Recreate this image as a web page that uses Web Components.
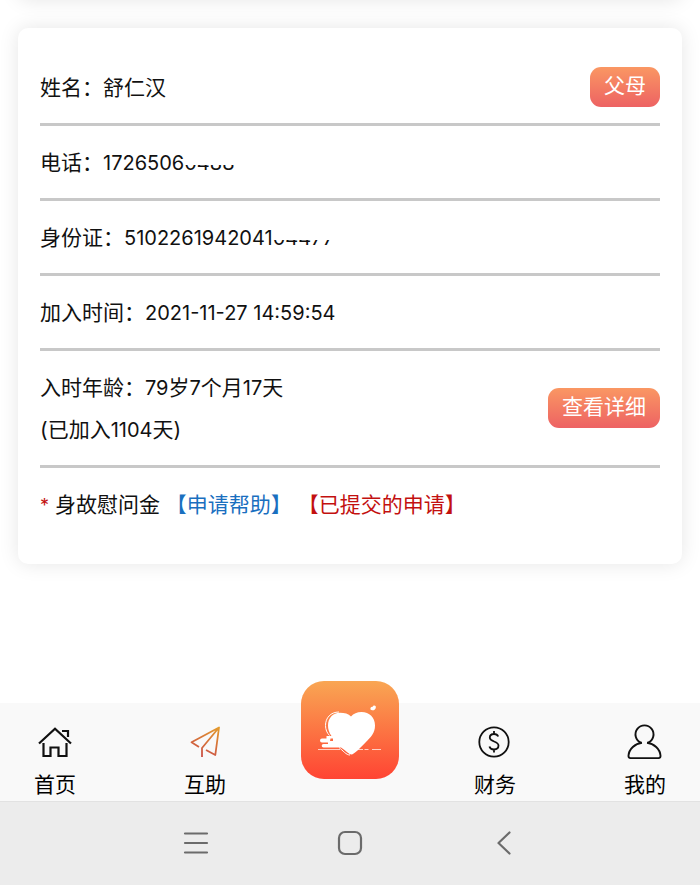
<!DOCTYPE html>
<html lang="zh-CN">
<head>
<meta charset="utf-8">
<meta name="viewport" content="width=device-width, initial-scale=1">
<title>互助</title>
<style>
  body {
    margin: 0;
    background: #fff;
    color: #111;
    font: 21px/42px Inter, "Noto Sans CJK SC", sans-serif;
  }
  small { font-size: 20px; }
</style>
</head>
<body>
<app-page>
  <member-card class="previous"></member-card>
  <member-card>
    <info-row label="姓名">舒仁汉<pill-button slot="action">父母</pill-button></info-row>
    <info-row label="电话"><small>1726506<half-hidden>0488</half-hidden></small></info-row>
    <info-row label="身份证"><small>5102261942041<half-hidden>04477</half-hidden></small></info-row>
    <info-row label="加入时间"><small>2021-11-27 14:59:54</small></info-row>
    <info-row label="入时年龄"><small>79</small>岁<small>7</small>个月<small>17</small>天<br>(已加入<small>1104</small>天)<pill-button slot="action">查看详细</pill-button></info-row>
    <apply-row></apply-row>
  </member-card>
  <tab-bar slot="footer">
    <tab-item label="首页">
      <svg viewBox="0 0 36 36" width="36" height="36" fill="none" stroke="#111" stroke-width="2.2">
        <path d="M2 19.5 18 4.7 34 19.5M25 7h6v6M6.5 19v13h7v-8.5h8V32h8V19"/>
      </svg>
    </tab-item>
    <tab-item label="互助">
      <svg viewBox="0 0 36 36" width="36" height="36" fill="none" stroke="url(#plane)" stroke-width="1.8" stroke-linejoin="round">
        <defs>
          <linearGradient id="plane" gradientUnits="userSpaceOnUse" x1="30" y1="3" x2="18" y2="33">
            <stop offset="0" stop-color="#e39a2d"/>
            <stop offset="1" stop-color="#cb5146"/>
          </linearGradient>
        </defs>
        <path d="M12 23 4.5 18.3 32 3.5 28.3 31 19 26M15 33v-9L32 3.5"/>
      </svg>
    </tab-item>
    <heart-button></heart-button>
    <tab-item label="财务">
      <svg viewBox="0 0 36 36" width="36" height="36" fill="none" stroke="#111" stroke-width="1.8">
        <circle cx="17" cy="18" r="14.7"/>
        <path d="M17 7v3M17 25.5v3M21.2 12.5C20.5 10.8 19 10 17 10c-2.5 0-4.2 1.4-4.2 3.6 0 4.8 8.7 3 8.7 8 0 2.500-1.900 3.900-4.500 3.900-2.400 0-4-1-4.600-3"/>
      </svg>
    </tab-item>
    <tab-item label="我的">
      <svg viewBox="0 0 36 36" width="36" height="36" fill="none" stroke="#111" stroke-width="1.9" stroke-linejoin="round">
        <path d="M14 18.700a9 9 0 1 1 7 0"/>
        <path d="M15 18.700C8 19.500 2 25 1.500 31.500q-.2 2.600 2 2.600h28q2.200 0 2-2.600C33 25 27 19.500 20 18.700"/>
      </svg>
    </tab-item>
  </tab-bar>
  <system-bar slot="footer"></system-bar>
</app-page>

<script>
class AppPage extends HTMLElement {
  constructor() {
    super();
    this.attachShadow({ mode: 'open' }).innerHTML = `
      <style>
        :host { display: flex; flex-direction: column; min-height: 100vh; }
        main { flex: 1; overflow: hidden; padding: 0 18px 40px; }
      </style>
      <main><slot></slot></main>
      <slot name="footer"></slot>
    `;
  }
}

class MemberCard extends HTMLElement {
  constructor() {
    super();
    this.attachShadow({ mode: 'open' }).innerHTML = `
      <style>
        :host {
          display: block;
          margin-bottom: 28px;
          padding: 23px 22px;
          border-radius: 10px;
          background: #fff;
          box-shadow: 0 0 20px rgba(0, 0, 0, .1);
        }
        /* the card above, scrolled out of view */
        :host(.previous) { margin-top: -46px; }
      </style>
      <slot></slot>
    `;
  }
}

class InfoRow extends HTMLElement {
  constructor() {
    super();
    this.attachShadow({ mode: 'open' });
  }

  connectedCallback() {
    this.shadowRoot.innerHTML = `
      <style>
        :host {
          display: flex;
          align-items: center;
          justify-content: space-between;
          padding: 14px 0;
          border-bottom: 3px solid #c8c8c8;
        }
        .text { padding-top: 2px; }
      </style>
      <div class="text">${this.getAttribute('label')}：<slot></slot></div>
      <slot name="action"></slot>
    `;
  }
}

class HalfHidden extends HTMLElement {
  constructor() {
    super();
    this.attachShadow({ mode: 'open' }).innerHTML = `
      <style>
        :host { display: inline-block; vertical-align: top; clip-path: inset(23px 0 0 0); }
      </style>
      <slot></slot>
    `;
  }
}

class PillButton extends HTMLElement {
  constructor() {
    super();
    this.attachShadow({ mode: 'open' }).innerHTML = `
      <style>
        :host { display: block; flex: none; }
        button {
          display: block;
          height: 40px;
          padding: 0 14px 2px;
          border: 0;
          border-radius: 11px;
          background: linear-gradient(#fa9763, #ed6263);
          color: #fff;
          font: inherit;
          line-height: 38px;
          cursor: pointer;
        }
      </style>
      <button type="button"><slot></slot></button>
    `;
  }
}

class ApplyRow extends HTMLElement {
  constructor() {
    super();
    this.attachShadow({ mode: 'open' }).innerHTML = `
      <style>
        :host { display: block; padding: 16px 0 14px; }
        a { text-decoration: none; }
        .star, .done { color: #c3100f; }
        .star { font-size: 18px; }
        .help { color: #1a6fbf; }
      </style>
      <span class="star">*</span> 身故慰问金
      <a class="help" href="#apply">【申请帮助】</a>
      <a class="done" href="#submitted">【已提交的申请】</a>
    `;
  }
}

class TabBar extends HTMLElement {
  constructor() {
    super();
    this.attachShadow({ mode: 'open' }).innerHTML = `
      <style>
        :host { display: block; background: #f9f9f9; color: #000; }
        nav { display: flex; justify-content: space-between; align-items: flex-start; }
      </style>
      <nav><slot></slot></nav>
    `;
  }
}

class TabItem extends HTMLElement {
  constructor() {
    super();
    this.attachShadow({ mode: 'open' });
  }

  connectedCallback() {
    this.shadowRoot.innerHTML = `
      <style>
        :host { display: block; width: 110px; }
        a {
          display: flex;
          flex-direction: column;
          align-items: center;
          gap: 10px;
          padding: 21px 0 1px;
          color: inherit;
          line-height: 30px;
          text-decoration: none;
        }
        ::slotted(svg) { display: block; }
      </style>
      <a href="#"><slot></slot><span>${this.getAttribute('label')}</span></a>
    `;
  }
}

class HeartButton extends HTMLElement {
  constructor() {
    super();
    this.attachShadow({ mode: 'open' }).innerHTML = `
      <style>
        :host { display: block; width: 100px; margin-top: -22px; }
        button {
          display: block;
          width: 98px;
          height: 98px;
          margin: 0 auto;
          padding: 0;
          border: 0;
          border-radius: 23px;
          background: linear-gradient(#f9a653, #ff4433);
          cursor: pointer;
        }
        svg { display: block; }
      </style>
      <button type="button" aria-label="爱心">
        <svg viewBox="0 0 98 98" width="98" height="98" fill="#fff">
          <path d="M50.5 73.5C48 73.5 46 70.5 40 66.500H22.500a1.800 1.800 0 0 1 0-3.600H27V61.500H21a2 2 0 1 1 0-4H29.500L29 60H32V57.500H25.500V55H30.500C28 51.5 27 48 27 44.5 27 37 32 31.8 39 31.8c4.5 0 8.5 1 11 3.7 2.5-3 6-4.5 10.5-4.5C68.5 31 74 36.5 74 44.5 74 52 70 56 64.5 61.5 59.5 66.5 53 73.5 50.5 73.5z"/>
          <path d="M38 31C29.5 31 24.5 37 24.5 44.5c0 4 1.5 7.5 4 10M38 66.500c4 3 7 7.500 11 7.500" fill="none" stroke="#fff" stroke-width="1"/>
          <path d="M17 68.500h22M55 68.500h7M63.500 68.500h4M71 68.500h9" stroke="#fff" stroke-width="1" stroke-opacity=".7"/>
          <path d="M69.5 28.500c-.5-1.800.8-3 2.200-2.700.4-1.500 2-1.800 2.900-.8.800 1.600-.3 3.700-1.800 4.200-1.200.3-2.700 0-3.300-.7z"/>
        </svg>
      </button>
    `;
  }
}

class SystemBar extends HTMLElement {
  constructor() {
    super();
    this.attachShadow({ mode: 'open' }).innerHTML = `
      <style>
        :host {
          display: flex;
          justify-content: center;
          padding-bottom: 2px;
          border-top: 1px solid #e2e2e2;
          background: #ececec;
        }
        button {
          display: grid;
          place-items: center;
          width: 154px;
          height: 81px;
          padding: 0;
          border: 0;
          background: none;
        }
        svg { fill: none; stroke: #6b6b6b; stroke-width: 2.2; stroke-linecap: round; stroke-linejoin: round; }
      </style>
      <button type="button" aria-label="菜单">
        <svg viewBox="0 0 26 26" width="26" height="26"><path d="M2 3.5h22M2 13h22M2 22.5h22"/></svg>
      </button>
      <button type="button" aria-label="主页">
        <svg viewBox="0 0 26 26" width="26" height="26"><rect x="2" y="2" width="22" height="22" rx="6"/></svg>
      </button>
      <button type="button" aria-label="返回">
        <svg viewBox="0 0 26 26" width="26" height="26"><path d="M18.5 2.500 7.500 13l11 10.500"/></svg>
      </button>
    `;
  }
}

customElements.define('app-page', AppPage);
customElements.define('member-card', MemberCard);
customElements.define('info-row', InfoRow);
customElements.define('half-hidden', HalfHidden);
customElements.define('pill-button', PillButton);
customElements.define('apply-row', ApplyRow);
customElements.define('tab-bar', TabBar);
customElements.define('tab-item', TabItem);
customElements.define('heart-button', HeartButton);
customElements.define('system-bar', SystemBar);
</script>
</body>
</html>
